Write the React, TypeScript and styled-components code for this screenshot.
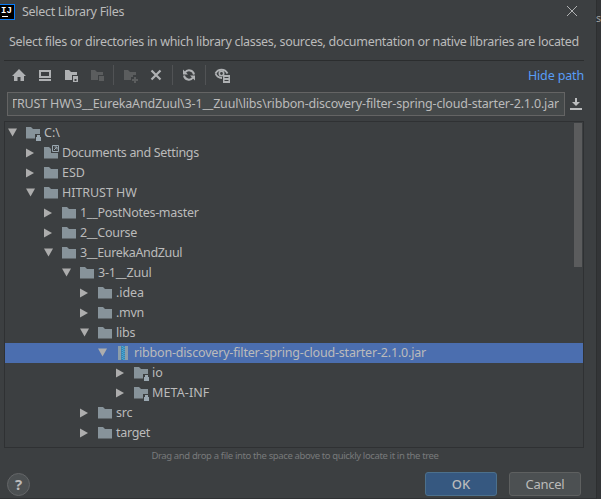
import React from "react";
import styled, { createGlobalStyle, css } from "styled-components";

const GlobalStyle = createGlobalStyle`
  * { box-sizing: border-box; }
  body { margin: 0; background: #3c3f41; overflow: hidden; }
`;

const Screen = styled.div`
  display: flex;
  width: 601px;
  height: 499px;
  background: #3c3f41;
  color: #bbbbbb;
  font: 12.5px/20px "Noto Sans", "Open Sans", sans-serif;
  white-space: nowrap;
  overflow: hidden;
`;

const Dialog = styled.main`
  display: flex;
  flex-direction: column;
  width: 596px;
  height: 499px;
  border-bottom: 1px solid #303234;
`;

const Backdrop = styled.aside`
  width: 5px;
  padding-top: 8px;
  overflow: hidden;
  background: #333537;
  color: #a0a0a0;
  font-size: 10.5px;
  box-shadow: inset 1px 0 #2d2f30;
`;

const Label = styled.span<{ $spacing?: number }>`
  letter-spacing: ${(p) => p.$spacing ?? 0}px;
`;

const TitleBar = styled.header`
  display: flex;
  align-items: center;
  height: 24px;
  padding-right: 18px;
  line-height: 18px;
  & > :last-child { margin-left: auto; }
`;

const AppLogo = styled.div`
  display: flex;
  flex-direction: column;
  justify-content: space-between;
  width: 15px;
  height: 16px;
  margin-right: 7px;
  padding: 2px 0 2px 1px;
  border: 1px solid #087cfa;
  border-left: 0;
  background: #000;
  color: #fff;
  font: bold 9px/8px "Liberation Mono", monospace;
  &::after { content: ""; width: 6px; height: 1px; margin-left: 1px; background: #fff; }
`;

const Description = styled.p`
  height: 37px;
  margin: 0 12px 0 4px;
  padding: 8px 0 0 5px;
  border-bottom: 1px solid #2b2d2e;
`;

const Toolbar = styled.div`
  display: flex;
  align-items: center;
  height: 31px;
  padding: 0 12px 3px 11px;
`;

const Tool = styled.button<{ $gap?: number; $disabled?: boolean }>`
  display: flex;
  width: 16px;
  height: 16px;
  margin: 0 ${(p) => p.$gap ?? 10}px 0 0;
  padding: 0;
  border: 0;
  background: none;
  color: ${(p) => (p.$disabled ? "#5b5d5e" : "#afb1b3")};
`;

const Divider = styled.i<{ $gap?: number }>`
  width: 1px;
  height: 20px;
  margin-right: ${(p) => p.$gap ?? 8}px;
  background: #515355;
`;

const PathLink = styled.a`
  margin-left: auto;
  padding-top: 2px;
  color: #589df6;
  letter-spacing: -0.15px;
`;

const PathRow = styled.div`
  display: flex;
  align-items: center;
  height: 24px;
  padding-left: 7px;
`;

const PathField = styled.div`
  display: flex;
  width: 558px;
  height: 24px;
  margin-right: 3px;
  padding: 0 5px;
  border: 1px solid #646464;
  background: #45494a;
`;

const PathText = styled.div`
  display: flex;
  flex: 1;
  justify-content: flex-end;
  overflow: hidden;
  line-height: 21px;
`;

const TreePanel = styled.section`
  display: flex;
  width: 580px;
  height: 327px;
  margin: 5px 0 0 4px;
  border: 1px solid #2f3133;
  padding-top: 1px;
`;

const Rows = styled.div`
  flex: 1;
`;

const ScrollTrack = styled.div`
  width: 9px;
  margin-left: -9px;
`;

const ScrollThumb = styled.div`
  width: 8px;
  height: 144px;
  background: #5b5c5d;
`;

const Row = styled.div<{ $level: number; $selected?: boolean }>`
  display: flex;
  align-items: center;
  height: 20px;
  padding-left: ${(p) => 2 + p.$level * 18}px;
  padding-bottom: 2px;
  ${(p) =>
    p.$selected &&
    css`
      background: #4b6eaf;
    `}
`;

const RowLabel = styled(Label)`
  margin-top: 2px;
  line-height: 18px;
`;

const Hint = styled.div`
  height: 20px;
  padding-top: 1px;
  text-align: center;
  padding-right: 6px;
  color: #787a7b;
  font-size: 9.5px;
  line-height: 14px;
`;

const Footer = styled.footer`
  display: flex;
  align-items: center;
  height: 24px;
  margin-top: 4px;
  padding: 0 15px 0 7px;
`;

const HelpButton = styled.button`
  width: 23px;
  height: 23px;
  margin-right: auto;
  padding: 0;
  border: 1px solid #646668;
  border-radius: 50%;
  background: #4c5052;
  color: #bbbbbb;
  font: bold 15px/20px "Noto Sans", sans-serif;
`;

const Button = styled.button<{ $primary?: boolean }>`
  width: 72px;
  height: 24px;
  margin-left: 12px;
  padding: 0;
  border: 1px solid ${(p) => (p.$primary ? "#4c708c" : "#5e6060")};
  border-radius: 3px;
  background: ${(p) => (p.$primary ? "#365880" : "#4c5052")};
  color: #bbbbbb;
  font: ${(p) => (p.$primary ? 500 : 400)} 13px/20px "Noto Sans", sans-serif;
  letter-spacing: ${(p) => (p.$primary ? 0 : -0.25)}px;
`;

const Icon = ({ children }: { children: React.ReactNode }) => (
  <svg width="16" height="16" viewBox="0 0 16 16" fill="currentColor">{children}</svg>
);

const HomeIcon = () => <Icon><path d="M8 2 15 9h-2v5H9.500v-4h-3v4H3V9H1z" /></Icon>;
const DesktopIcon = () => (
  <Icon><path fillRule="evenodd" d="M2 3h12v8H2zm2 2v4h8V5zM2 12h12v2H2z" /></Icon>
);
const ProjectIcon = () => (
  <Icon>
    <path d="M2 3h4l2 2h6v3H9v5H2z" />
    <path fillRule="evenodd" d="M10 9h5v6h-5zm1.500 3v2h2v-2z" />
  </Icon>
);
const ModuleIcon = () => <Icon><path d="M2 3h4l2 2h6v3H9v5H2zM10 9h5v5h-5z" /></Icon>;
const NewFolderIcon = () => (
  <Icon><path d="M1 3h4l2 2h6v3h-3v2H8v3H1zM11 10h2v2h2v2h-2v2h-2v-2H9v-2h2z" /></Icon>
);
const DeleteIcon = () => (
  <Icon><path d="m3.500 3.500 9 9m0-9-9 9" stroke="currentColor" strokeWidth="2.200" /></Icon>
);
const RefreshIcon = () => (
  <Icon>
    <path d="M4 5.500a5 5 0 0 1 9 2M12 10.500a5 5 0 0 1-9-2" fill="none" stroke="currentColor" strokeWidth="2" />
    <path d="M2 2.500v5h5zM14 13.500v-5H9z" />
  </Icon>
);
const HiddenIcon = () => (
  <Icon>
    <path d="M1.500 6.500C4 1.500 11 1.500 13.500 6.500M1.500 6.500C2.500 9 4.500 10.800 8 11" fill="none" stroke="currentColor" strokeWidth="1.800" />
    <circle cx="7.500" cy="6.500" r="2.200" fill="none" stroke="currentColor" strokeWidth="1.600" />
    <path fillRule="evenodd" d="M9 8h7v8H9zm1.500 2v1h4v-1zm0 3v1h4v-1z" />
  </Icon>
);

const CloseIcon = () => (
  <svg width="12" height="12" viewBox="0 0 12 12">
    <path d="m1 0 10 10M11 0 1 10" stroke="#b0b2b3" />
  </svg>
);
const DownloadIcon = () => (
  <svg width="16" height="16" viewBox="0 0 16 16" fill="#bbbdbe">
    <path d="M7 2h2v4h3L8 10 4 6h3zM2 12h12v2H2z" />
  </svg>
);

const Arrow = ({ open }: { open: boolean }) => (
  <svg width="19" height="16" viewBox="0 0 19 16" fill="#adadad">
    <path d={open ? "M1 4.500h9L5.500 12.500z" : "M1 4.500v9l8-4.500z"} />
  </svg>
);

type Kind = "folder" | "locked" | "link" | "jar";

const FileIcon = ({ kind }: { kind: Kind }) => (
  <svg width="18" height="18" viewBox="0 0 18 18" fill="#87939a">
    {kind === "jar" ? (
      <>
        <path d="M2 3h3v14H2zM9 3h3v14H9z" fill="#8c9da9" />
        <path d="M5 3h4v14H5z" fill="#3d7fae" />
        <path d="M6.500 3v14M8 4v14" fill="none" stroke="#42b0dc" strokeWidth="1.500" strokeDasharray="1 1" />
      </>
    ) : (
      <path d="M0 4h5l2 2h7v9.500H0z" />
    )}
    {kind === "locked" && (
      <>
        <path d="M9 11h5v5H9z" fill="#3c3f41" />
        <path d="M10 14h5v4h-5z" fill="#9aa7b0" />
        <path d="M11 14h3v-2h-3z" fill="#9aa7b0" />
      </>
    )}
    {kind === "link" && (
      <>
        <path d="M7 1h9v9H7z" fill="#3c3f41" />
        <path d="M8.500 2.500h6v6h-6zM10 7l3-3M10.500 4H13v2.500" fill="none" stroke="#9aa7b0" />
      </>
    )}
  </svg>
);

interface Node {
  level: number;
  name: string;
  kind?: Kind;
  open?: boolean;
  selected?: boolean;
  spacing?: number;
}

const nodes: Node[] = [
  { level: 0, name: "C:\\", kind: "locked", open: true },
  { level: 1, name: "Documents and Settings", kind: "link", spacing: -0.32 },
  { level: 1, name: "ESD" },
  { level: 1, name: "HITRUST HW", open: true, spacing: -0.05 },
  { level: 2, name: "1__PostNotes-master", spacing: -0.28 },
  { level: 2, name: "2__Course", spacing: -0.3 },
  { level: 2, name: "3__EurekaAndZuul", open: true, spacing: -0.35 },
  { level: 3, name: "3-1__Zuul", open: true, spacing: -0.2 },
  { level: 4, name: ".idea", spacing: -0.1 },
  { level: 4, name: ".mvn", spacing: -0.3 },
  { level: 4, name: "libs", open: true, spacing: -0.25 },
  {
    level: 5,
    name: "ribbon-discovery-filter-spring-cloud-starter-2.1.0.jar",
    kind: "jar",
    open: true,
    selected: true,
    spacing: -0.18,
  },
  { level: 6, name: "io", kind: "locked" },
  { level: 6, name: "META-INF", kind: "locked", spacing: 0.1 },
  { level: 4, name: "src", spacing: -0.2 },
  { level: 4, name: "target", spacing: -0.3 },
];

export default function App() {
  return (
    <>
      <GlobalStyle />
      <Screen>
        <Dialog>
          <TitleBar>
            <AppLogo>IJ</AppLogo>
            <Label $spacing={-0.3}>Select Library Files</Label>
            <CloseIcon />
          </TitleBar>
          <Description>
            <Label $spacing={-0.31}>Select files or directories in which library classes, sources, documentation or native libraries are located</Label>
          </Description>
          <Toolbar>
            <Tool><HomeIcon /></Tool>
            <Tool><DesktopIcon /></Tool>
            <Tool><ProjectIcon /></Tool>
            <Tool $disabled $gap={8}><ModuleIcon /></Tool>
            <Divider $gap={9} />
            <Tool $disabled $gap={9}><NewFolderIcon /></Tool>
            <Tool $gap={8}><DeleteIcon /></Tool>
            <Divider />
            <Tool $gap={8}><RefreshIcon /></Tool>
            <Divider />
            <Tool><HiddenIcon /></Tool>
            <PathLink>Hide path</PathLink>
          </Toolbar>
          <PathRow>
            <PathField>
              <PathText>
                <Label $spacing={-0.175}>TRUST HW\3__EurekaAndZuul\3-1__Zuul\libs\ribbon-discovery-filter-spring-cloud-starter-2.1.0.jar</Label>
              </PathText>
            </PathField>
            <DownloadIcon />
          </PathRow>
          <TreePanel>
            <Rows>
              {nodes.map((n) => (
                <Row key={n.name} $level={n.level} $selected={n.selected}>
                  <Arrow open={!!n.open} />
                  <FileIcon kind={n.kind ?? "folder"} />
                  <RowLabel $spacing={n.spacing}>{n.name}</RowLabel>
                </Row>
              ))}
            </Rows>
            <ScrollTrack><ScrollThumb /></ScrollTrack>
          </TreePanel>
          <Hint><Label $spacing={-0.37}>Drag and drop a file into the space above to quickly locate it in the tree</Label></Hint>
          <Footer>
            <HelpButton>?</HelpButton>
            <Button $primary>OK</Button>
            <Button>Cancel</Button>
          </Footer>
        </Dialog>
        <Backdrop>s</Backdrop>
      </Screen>
    </>
  );
}
